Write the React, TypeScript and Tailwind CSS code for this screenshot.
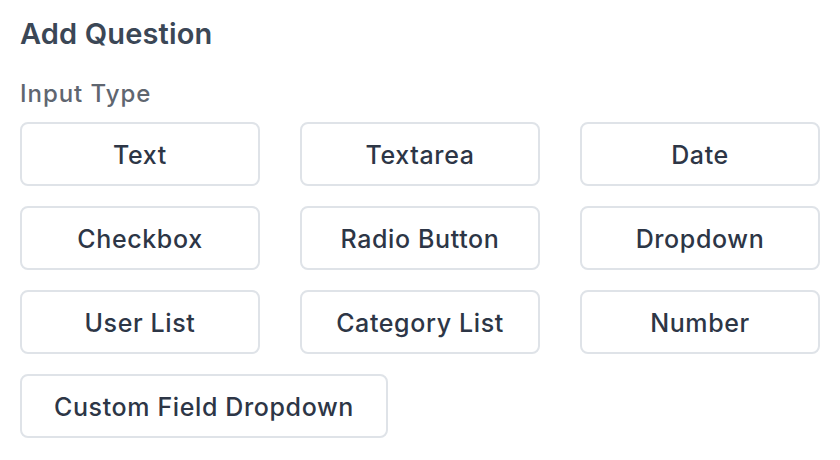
const TYPES = [
  'Text',
  'Textarea',
  'Date',
  'Checkbox',
  'Radio Button',
  'Dropdown',
  'User List',
  'Category List',
  'Number',
];

function TypeButton({ label, className = '' }: { label: string; className?: string }) {
  return (
    <button
      type="button"
      className={`h-16 rounded-lg border-2 border-[#dfe3e8] bg-white pt-[3px] text-[25px] font-medium tracking-[0.025em] text-[#2d3646] ${className}`}
    >
      {label}
    </button>
  );
}

export default function App() {
  return (
    <div className="h-[460px] w-[840px] bg-white px-5 pt-[14px] font-['Inter',sans-serif]">
      <h2 className="text-[29px] font-semibold leading-[40px] tracking-[0.005em] text-[#3b4756]">Add Question</h2>
      <div className="mt-[25px] text-[24px] font-medium leading-[30px] tracking-[0.04em] text-[#5f6670]">
        Input Type
      </div>
      <div className="mt-[13px] grid grid-cols-3 gap-x-10 gap-y-5">
        {TYPES.map((t) => (
          <TypeButton key={t} label={t} />
        ))}
        <div className="col-span-3">
          <TypeButton label="Custom Field Dropdown" className="px-8" />
        </div>
      </div>
    </div>
  );
}
